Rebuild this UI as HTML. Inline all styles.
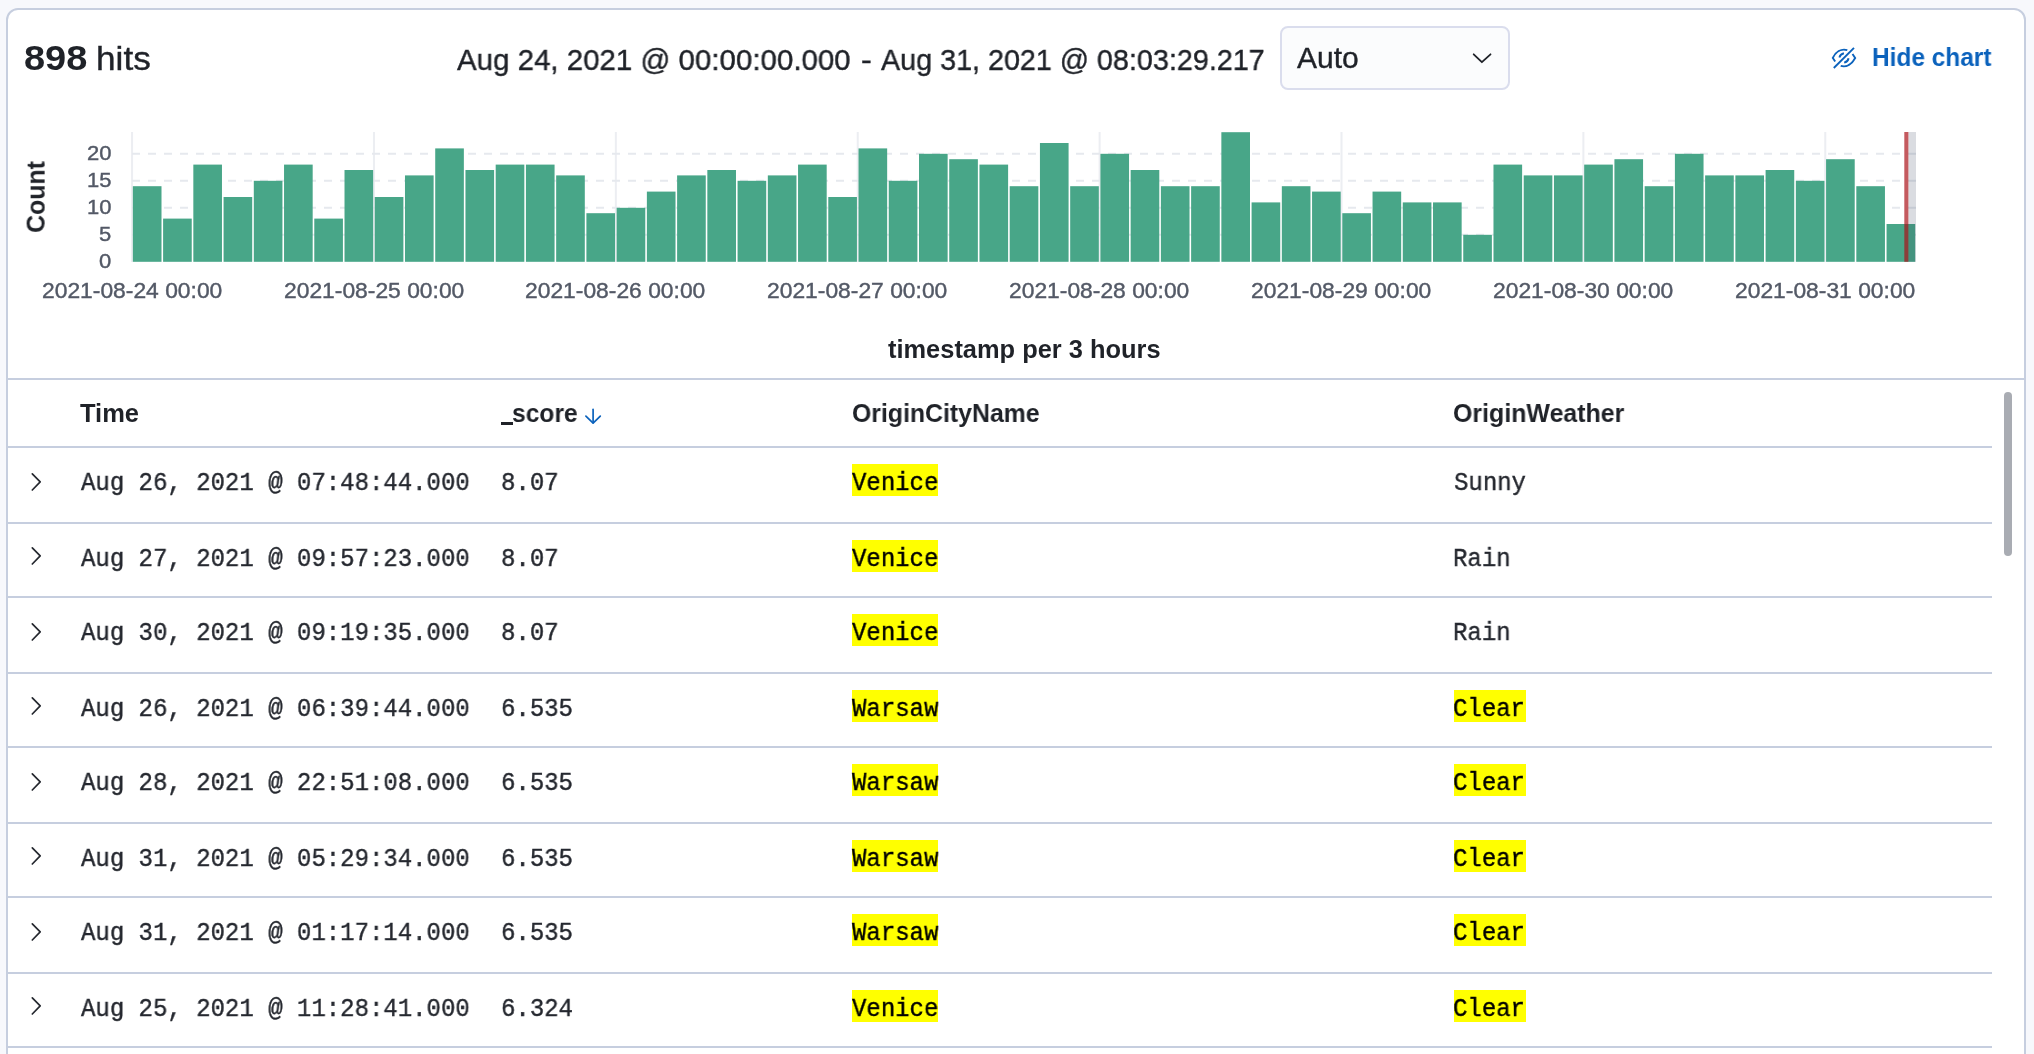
<!DOCTYPE html>
<html><head><meta charset="utf-8"><title>Discover</title>
<style>
html,body{margin:0;padding:0;overflow:hidden;width:2034px;height:1054px;}
#root{position:relative;width:2034px;height:1054px;overflow:hidden;background:#f7f8fc;}
body{width:2034px;height:1054px;overflow:hidden;background:#f7f8fc;position:relative;font-family:"Liberation Sans",sans-serif;}
.panel{position:absolute;left:6px;top:8px;width:2016px;height:1100px;border:2px solid #c6cedf;border-radius:12px;background:#fff;}
.t{position:absolute;white-space:pre;line-height:0;transform-origin:0 0;will-change:transform;}
.abs{position:absolute;}
.sel{position:absolute;left:1280px;top:26px;width:226px;height:60px;border:2px solid #dadded;border-radius:8px;background:#fbfcfd;}
.hl{position:absolute;height:2px;background:#c6cedf;}
.mk{position:absolute;height:32px;background:#ffff00;}
.thumb{position:absolute;left:2004px;top:392px;width:8px;height:164px;border-radius:4px;background:#a9acb3;}
</style></head><body>
<div id="root">
<div class="panel"></div>
<span class="t" style="left:24.06px;top:57.87px;font-family:'Liberation Sans', sans-serif;font-weight:700;font-size:35.00px;transform:scaleX(1.0841);color:#1f2228;">898</span>
<span class="t" style="left:96.24px;top:58.21px;font-family:'Liberation Sans', sans-serif;font-weight:400;font-size:34.00px;transform:scaleX(1.0345);color:#1f2228;-webkit-text-stroke:0.40px #1f2228;">hits</span>
<span class="t" style="left:457.10px;top:59.60px;font-family:'Liberation Sans', sans-serif;font-weight:400;font-size:30.00px;transform:scaleX(0.9821);color:#1f2228;-webkit-text-stroke:0.40px #1f2228;">Aug 24, 2021 @ 00:00:00.000</span>
<span class="t" style="left:860.65px;top:59.60px;font-family:'Liberation Sans', sans-serif;font-weight:400;font-size:30.00px;transform:scaleX(1.0748);color:#1f2228;-webkit-text-stroke:0.40px #1f2228;">-</span>
<span class="t" style="left:880.50px;top:59.60px;font-family:'Liberation Sans', sans-serif;font-weight:400;font-size:30.00px;transform:scaleX(0.9574);color:#1f2228;-webkit-text-stroke:0.40px #1f2228;">Aug 31, 2021 @ 08:03:29.217</span>
<div class="sel"></div>
<span class="t" style="left:1297.30px;top:57.50px;font-family:'Liberation Sans', sans-serif;font-weight:400;font-size:30.00px;color:#1f2228;-webkit-text-stroke:0.40px #1f2228;">Auto</span>
<svg class="abs" style="left:1466px;top:46px" width="32" height="24" viewBox="0 0 32 24"><path d="M7.7 8.3 L15.9 16.2 L24.5 8.3" fill="none" stroke="#1f2228" stroke-width="1.8" stroke-linecap="round" stroke-linejoin="round"/></svg>
<svg class="abs" style="left:1826px;top:42px" width="36" height="32" viewBox="0 0 36 32"><g fill="none" stroke="#0b62bc" stroke-width="1.9" stroke-linecap="butt">
<path d="M21.3 8.2 C15 6.4 9.6 10 6.8 15.9 L9.2 19.6"/>
<path d="M26.5 12 L29.2 16 C26 22 20.5 25.6 14.7 23.9"/>
<path d="M13.4 15.4 C14 13.2 15.6 11.8 17.9 11.3"/>
<path d="M18.2 20.6 C20.5 20.1 22.1 18.5 22.6 16.2"/>
<path d="M7.8 26 L28 5.8"/></g></svg>
<span class="t" style="left:1871.91px;top:57.09px;font-family:'Liberation Sans', sans-serif;font-weight:700;font-size:26.00px;transform:scaleX(0.9395);color:#0b62bc;">Hide chart</span>
<svg class="abs" style="left:0;top:0" width="2034" height="380" viewBox="0 0 2034 380"><rect x="131.06" y="132" width="2" height="130" fill="#eceef2"/><rect x="372.95" y="132" width="2" height="130" fill="#eceef2"/><rect x="614.84" y="132" width="2" height="130" fill="#eceef2"/><rect x="856.72" y="132" width="2" height="130" fill="#eceef2"/><rect x="1098.61" y="132" width="2" height="130" fill="#eceef2"/><rect x="1340.50" y="132" width="2" height="130" fill="#eceef2"/><rect x="1582.39" y="132" width="2" height="130" fill="#eceef2"/><rect x="1824.28" y="132" width="2" height="130" fill="#eceef2"/><line x1="132" x2="1916" y1="234.80" y2="234.80" stroke="#e6e9ee" stroke-width="2" stroke-dasharray="8 8"/><line x1="132" x2="1916" y1="207.80" y2="207.80" stroke="#e6e9ee" stroke-width="2" stroke-dasharray="8 8"/><line x1="132" x2="1916" y1="180.80" y2="180.80" stroke="#e6e9ee" stroke-width="2" stroke-dasharray="8 8"/><line x1="132" x2="1916" y1="153.80" y2="153.80" stroke="#e6e9ee" stroke-width="2" stroke-dasharray="8 8"/><rect x="132.86" y="186.20" width="28.64" height="75.60" fill="#48a688"/><rect x="163.10" y="218.60" width="28.64" height="43.20" fill="#48a688"/><rect x="193.33" y="164.60" width="28.64" height="97.20" fill="#48a688"/><rect x="223.57" y="197.00" width="28.64" height="64.80" fill="#48a688"/><rect x="253.80" y="180.80" width="28.64" height="81.00" fill="#48a688"/><rect x="284.04" y="164.60" width="28.64" height="97.20" fill="#48a688"/><rect x="314.28" y="218.60" width="28.64" height="43.20" fill="#48a688"/><rect x="344.51" y="170.00" width="28.64" height="91.80" fill="#48a688"/><rect x="374.75" y="197.00" width="28.64" height="64.80" fill="#48a688"/><rect x="404.98" y="175.40" width="28.64" height="86.40" fill="#48a688"/><rect x="435.22" y="148.40" width="28.64" height="113.40" fill="#48a688"/><rect x="465.46" y="170.00" width="28.64" height="91.80" fill="#48a688"/><rect x="495.69" y="164.60" width="28.64" height="97.20" fill="#48a688"/><rect x="525.93" y="164.60" width="28.64" height="97.20" fill="#48a688"/><rect x="556.16" y="175.40" width="28.64" height="86.40" fill="#48a688"/><rect x="586.40" y="213.20" width="28.64" height="48.60" fill="#48a688"/><rect x="616.64" y="207.80" width="28.64" height="54.00" fill="#48a688"/><rect x="646.87" y="191.60" width="28.64" height="70.20" fill="#48a688"/><rect x="677.11" y="175.40" width="28.64" height="86.40" fill="#48a688"/><rect x="707.34" y="170.00" width="28.64" height="91.80" fill="#48a688"/><rect x="737.58" y="180.80" width="28.64" height="81.00" fill="#48a688"/><rect x="767.82" y="175.40" width="28.64" height="86.40" fill="#48a688"/><rect x="798.05" y="164.60" width="28.64" height="97.20" fill="#48a688"/><rect x="828.29" y="197.00" width="28.64" height="64.80" fill="#48a688"/><rect x="858.52" y="148.40" width="28.64" height="113.40" fill="#48a688"/><rect x="888.76" y="180.80" width="28.64" height="81.00" fill="#48a688"/><rect x="919.00" y="153.80" width="28.64" height="108.00" fill="#48a688"/><rect x="949.23" y="159.20" width="28.64" height="102.60" fill="#48a688"/><rect x="979.47" y="164.60" width="28.64" height="97.20" fill="#48a688"/><rect x="1009.70" y="186.20" width="28.64" height="75.60" fill="#48a688"/><rect x="1039.94" y="143.00" width="28.64" height="118.80" fill="#48a688"/><rect x="1070.18" y="186.20" width="28.64" height="75.60" fill="#48a688"/><rect x="1100.41" y="153.80" width="28.64" height="108.00" fill="#48a688"/><rect x="1130.65" y="170.00" width="28.64" height="91.80" fill="#48a688"/><rect x="1160.88" y="186.20" width="28.64" height="75.60" fill="#48a688"/><rect x="1191.12" y="186.20" width="28.64" height="75.60" fill="#48a688"/><rect x="1221.36" y="132.20" width="28.64" height="129.60" fill="#48a688"/><rect x="1251.59" y="202.40" width="28.64" height="59.40" fill="#48a688"/><rect x="1281.83" y="186.20" width="28.64" height="75.60" fill="#48a688"/><rect x="1312.06" y="191.60" width="28.64" height="70.20" fill="#48a688"/><rect x="1342.30" y="213.20" width="28.64" height="48.60" fill="#48a688"/><rect x="1372.54" y="191.60" width="28.64" height="70.20" fill="#48a688"/><rect x="1402.77" y="202.40" width="28.64" height="59.40" fill="#48a688"/><rect x="1433.01" y="202.40" width="28.64" height="59.40" fill="#48a688"/><rect x="1463.24" y="234.80" width="28.64" height="27.00" fill="#48a688"/><rect x="1493.48" y="164.60" width="28.64" height="97.20" fill="#48a688"/><rect x="1523.72" y="175.40" width="28.64" height="86.40" fill="#48a688"/><rect x="1553.95" y="175.40" width="28.64" height="86.40" fill="#48a688"/><rect x="1584.19" y="164.60" width="28.64" height="97.20" fill="#48a688"/><rect x="1614.42" y="159.20" width="28.64" height="102.60" fill="#48a688"/><rect x="1644.66" y="186.20" width="28.64" height="75.60" fill="#48a688"/><rect x="1674.90" y="153.80" width="28.64" height="108.00" fill="#48a688"/><rect x="1705.13" y="175.40" width="28.64" height="86.40" fill="#48a688"/><rect x="1735.37" y="175.40" width="28.64" height="86.40" fill="#48a688"/><rect x="1765.60" y="170.00" width="28.64" height="91.80" fill="#48a688"/><rect x="1795.84" y="180.80" width="28.64" height="81.00" fill="#48a688"/><rect x="1826.08" y="159.20" width="28.64" height="102.60" fill="#48a688"/><rect x="1856.31" y="186.20" width="28.64" height="75.60" fill="#48a688"/><rect x="1886.55" y="224.00" width="28.64" height="37.80" fill="#48a688"/><rect x="1908.4" y="132" width="7.6" height="129.8" fill="#343c5a" opacity="0.18"/><rect x="1904.3" y="132" width="4.1" height="129.8" fill="#a91017" opacity="0.69"/></svg>
<span class="t" style="left:0.00px;top:0.00px;font-family:'Liberation Sans',sans-serif;font-weight:700;font-size:25px;color:#1f2228;transform-origin:0 0;transform:translate(35.63px,232.90px) rotate(-90deg) scaleX(0.9961) translate(0,-0.00px);">Count</span>
<span class="t" style="left:87.15px;top:153.07px;font-family:'Liberation Sans', sans-serif;font-weight:400;font-size:20.00px;transform:scaleX(1.1000);color:#535966;-webkit-text-stroke:0.40px #535966;">20</span>
<span class="t" style="left:87.26px;top:180.07px;font-family:'Liberation Sans', sans-serif;font-weight:400;font-size:20.00px;transform:scaleX(1.1000);color:#535966;-webkit-text-stroke:0.40px #535966;">15</span>
<span class="t" style="left:87.15px;top:207.07px;font-family:'Liberation Sans', sans-serif;font-weight:400;font-size:20.00px;transform:scaleX(1.1000);color:#535966;-webkit-text-stroke:0.40px #535966;">10</span>
<span class="t" style="left:99.47px;top:234.07px;font-family:'Liberation Sans', sans-serif;font-weight:400;font-size:20.00px;transform:scaleX(1.1000);color:#535966;-webkit-text-stroke:0.40px #535966;">5</span>
<span class="t" style="left:99.36px;top:261.37px;font-family:'Liberation Sans', sans-serif;font-weight:400;font-size:20.00px;transform:scaleX(1.1000);color:#535966;-webkit-text-stroke:0.40px #535966;">0</span>
<span class="t" style="left:41.72px;top:290.88px;font-family:'Liberation Sans', sans-serif;font-weight:400;font-size:21.40px;transform:scaleX(1.0674);color:#535966;-webkit-text-stroke:0.40px #535966;">2021-08-24 00:00</span>
<span class="t" style="left:283.61px;top:290.88px;font-family:'Liberation Sans', sans-serif;font-weight:400;font-size:21.40px;transform:scaleX(1.0674);color:#535966;-webkit-text-stroke:0.40px #535966;">2021-08-25 00:00</span>
<span class="t" style="left:525.49px;top:290.88px;font-family:'Liberation Sans', sans-serif;font-weight:400;font-size:21.40px;transform:scaleX(1.0674);color:#535966;-webkit-text-stroke:0.40px #535966;">2021-08-26 00:00</span>
<span class="t" style="left:767.38px;top:290.88px;font-family:'Liberation Sans', sans-serif;font-weight:400;font-size:21.40px;transform:scaleX(1.0674);color:#535966;-webkit-text-stroke:0.40px #535966;">2021-08-27 00:00</span>
<span class="t" style="left:1009.27px;top:290.88px;font-family:'Liberation Sans', sans-serif;font-weight:400;font-size:21.40px;transform:scaleX(1.0674);color:#535966;-webkit-text-stroke:0.40px #535966;">2021-08-28 00:00</span>
<span class="t" style="left:1251.16px;top:290.88px;font-family:'Liberation Sans', sans-serif;font-weight:400;font-size:21.40px;transform:scaleX(1.0674);color:#535966;-webkit-text-stroke:0.40px #535966;">2021-08-29 00:00</span>
<span class="t" style="left:1493.05px;top:290.88px;font-family:'Liberation Sans', sans-serif;font-weight:400;font-size:21.40px;transform:scaleX(1.0674);color:#535966;-webkit-text-stroke:0.40px #535966;">2021-08-30 00:00</span>
<span class="t" style="left:1734.93px;top:290.88px;font-family:'Liberation Sans', sans-serif;font-weight:400;font-size:21.40px;transform:scaleX(1.0674);color:#535966;-webkit-text-stroke:0.40px #535966;">2021-08-31 00:00</span>
<span class="t" style="left:888.05px;top:349.13px;font-family:'Liberation Sans', sans-serif;font-weight:700;font-size:25.00px;transform:scaleX(1.0166);color:#1f2228;">timestamp per 3 hours</span>
<div class="hl" style="top:378px;left:8px;width:2016px"></div>
<span class="t" style="left:80.45px;top:413.06px;font-family:'Liberation Sans', sans-serif;font-weight:700;font-size:25.50px;transform:scaleX(0.9933);color:#1f2228;">Time</span>
<div class="abs" style="left:501px;top:422.3px;width:11.5px;height:2.5px;background:#1f2228"></div>
<span class="t" style="left:512.44px;top:413.06px;font-family:'Liberation Sans', sans-serif;font-weight:700;font-size:25.50px;transform:scaleX(0.9657);color:#1f2228;">score</span>
<svg class="abs" style="left:580px;top:404px" width="26" height="24" viewBox="0 0 26 24"><g fill="none" stroke="#0b62bc" stroke-width="1.7" stroke-linecap="round" stroke-linejoin="round"><path d="M13.1 5.3 L13.1 18.6"/><path d="M5.9 12.2 L13.1 19.1 L20.3 12.2"/></g></svg>
<span class="t" style="left:851.81px;top:413.06px;font-family:'Liberation Sans', sans-serif;font-weight:700;font-size:25.50px;transform:scaleX(0.9736);color:#1f2228;">OriginCityName</span>
<span class="t" style="left:1452.80px;top:413.06px;font-family:'Liberation Sans', sans-serif;font-weight:700;font-size:25.50px;transform:scaleX(0.9781);color:#1f2228;">OriginWeather</span>
<div class="hl" style="top:446px;left:8px;width:1984px"></div>
<div class="hl" style="top:522px;left:8px;width:1984px"></div>
<div class="hl" style="top:596px;left:8px;width:1984px"></div>
<div class="hl" style="top:672px;left:8px;width:1984px"></div>
<div class="hl" style="top:746px;left:8px;width:1984px"></div>
<div class="hl" style="top:822px;left:8px;width:1984px"></div>
<div class="hl" style="top:896px;left:8px;width:1984px"></div>
<div class="hl" style="top:972px;left:8px;width:1984px"></div>
<div class="hl" style="top:1046px;left:8px;width:1984px"></div>
<svg class="abs" style="left:24px;top:469px" width="24" height="28" viewBox="0 0 24 28"><path d="M8.3 4.8 L16.2 12.9 L8.3 21" fill="none" stroke="#25282f" stroke-width="1.7" stroke-linecap="round" stroke-linejoin="round"/></svg>
<span class="t" style="left:80.90px;top:482.97px;font-family:'Liberation Mono', monospace;font-weight:400;font-size:26.40px;transform:scaleX(0.9091);color:#25282f;-webkit-text-stroke:0.40px #25282f;">Aug 26, 2021 @ 07:48:44.000</span>
<span class="t" style="left:501.04px;top:482.97px;font-family:'Liberation Mono', monospace;font-weight:400;font-size:26.40px;transform:scaleX(0.9091);color:#25282f;-webkit-text-stroke:0.40px #25282f;">8.07</span>
<div class="mk" style="left:852px;top:464px;width:86px"></div>
<span class="t" style="left:852.28px;top:482.97px;font-family:'Liberation Mono', monospace;font-weight:400;font-size:26.40px;transform:scaleX(0.9091);color:#000;-webkit-text-stroke:0.40px #000;">Venice</span>
<span class="t" style="left:1453.64px;top:482.97px;font-family:'Liberation Mono', monospace;font-weight:400;font-size:26.40px;transform:scaleX(0.9091);color:#25282f;-webkit-text-stroke:0.40px #25282f;">Sunny</span>
<svg class="abs" style="left:24px;top:543px" width="24" height="28" viewBox="0 0 24 28"><path d="M8.3 4.8 L16.2 12.9 L8.3 21" fill="none" stroke="#25282f" stroke-width="1.7" stroke-linecap="round" stroke-linejoin="round"/></svg>
<span class="t" style="left:80.90px;top:558.97px;font-family:'Liberation Mono', monospace;font-weight:400;font-size:26.40px;transform:scaleX(0.9091);color:#25282f;-webkit-text-stroke:0.40px #25282f;">Aug 27, 2021 @ 09:57:23.000</span>
<span class="t" style="left:501.04px;top:558.97px;font-family:'Liberation Mono', monospace;font-weight:400;font-size:26.40px;transform:scaleX(0.9091);color:#25282f;-webkit-text-stroke:0.40px #25282f;">8.07</span>
<div class="mk" style="left:852px;top:540px;width:86px"></div>
<span class="t" style="left:852.28px;top:558.97px;font-family:'Liberation Mono', monospace;font-weight:400;font-size:26.40px;transform:scaleX(0.9091);color:#000;-webkit-text-stroke:0.40px #000;">Venice</span>
<span class="t" style="left:1452.68px;top:558.97px;font-family:'Liberation Mono', monospace;font-weight:400;font-size:26.40px;transform:scaleX(0.9091);color:#25282f;-webkit-text-stroke:0.40px #25282f;">Rain</span>
<svg class="abs" style="left:24px;top:619px" width="24" height="28" viewBox="0 0 24 28"><path d="M8.3 4.8 L16.2 12.9 L8.3 21" fill="none" stroke="#25282f" stroke-width="1.7" stroke-linecap="round" stroke-linejoin="round"/></svg>
<span class="t" style="left:80.90px;top:632.97px;font-family:'Liberation Mono', monospace;font-weight:400;font-size:26.40px;transform:scaleX(0.9091);color:#25282f;-webkit-text-stroke:0.40px #25282f;">Aug 30, 2021 @ 09:19:35.000</span>
<span class="t" style="left:501.04px;top:632.97px;font-family:'Liberation Mono', monospace;font-weight:400;font-size:26.40px;transform:scaleX(0.9091);color:#25282f;-webkit-text-stroke:0.40px #25282f;">8.07</span>
<div class="mk" style="left:852px;top:614px;width:86px"></div>
<span class="t" style="left:852.28px;top:632.97px;font-family:'Liberation Mono', monospace;font-weight:400;font-size:26.40px;transform:scaleX(0.9091);color:#000;-webkit-text-stroke:0.40px #000;">Venice</span>
<span class="t" style="left:1452.68px;top:632.97px;font-family:'Liberation Mono', monospace;font-weight:400;font-size:26.40px;transform:scaleX(0.9091);color:#25282f;-webkit-text-stroke:0.40px #25282f;">Rain</span>
<svg class="abs" style="left:24px;top:693px" width="24" height="28" viewBox="0 0 24 28"><path d="M8.3 4.8 L16.2 12.9 L8.3 21" fill="none" stroke="#25282f" stroke-width="1.7" stroke-linecap="round" stroke-linejoin="round"/></svg>
<span class="t" style="left:80.90px;top:708.97px;font-family:'Liberation Mono', monospace;font-weight:400;font-size:26.40px;transform:scaleX(0.9091);color:#25282f;-webkit-text-stroke:0.40px #25282f;">Aug 26, 2021 @ 06:39:44.000</span>
<span class="t" style="left:500.80px;top:708.97px;font-family:'Liberation Mono', monospace;font-weight:400;font-size:26.40px;transform:scaleX(0.9091);color:#25282f;-webkit-text-stroke:0.40px #25282f;">6.535</span>
<div class="mk" style="left:852px;top:690px;width:86px"></div>
<span class="t" style="left:852.40px;top:708.97px;font-family:'Liberation Mono', monospace;font-weight:400;font-size:26.40px;transform:scaleX(0.9091);color:#000;-webkit-text-stroke:0.40px #000;">Warsaw</span>
<div class="mk" style="left:1454px;top:690px;width:72px"></div>
<span class="t" style="left:1452.78px;top:708.97px;font-family:'Liberation Mono', monospace;font-weight:400;font-size:26.40px;transform:scaleX(0.9091);color:#000;-webkit-text-stroke:0.40px #000;">Clear</span>
<svg class="abs" style="left:24px;top:769px" width="24" height="28" viewBox="0 0 24 28"><path d="M8.3 4.8 L16.2 12.9 L8.3 21" fill="none" stroke="#25282f" stroke-width="1.7" stroke-linecap="round" stroke-linejoin="round"/></svg>
<span class="t" style="left:80.90px;top:782.97px;font-family:'Liberation Mono', monospace;font-weight:400;font-size:26.40px;transform:scaleX(0.9091);color:#25282f;-webkit-text-stroke:0.40px #25282f;">Aug 28, 2021 @ 22:51:08.000</span>
<span class="t" style="left:500.80px;top:782.97px;font-family:'Liberation Mono', monospace;font-weight:400;font-size:26.40px;transform:scaleX(0.9091);color:#25282f;-webkit-text-stroke:0.40px #25282f;">6.535</span>
<div class="mk" style="left:852px;top:764px;width:86px"></div>
<span class="t" style="left:852.40px;top:782.97px;font-family:'Liberation Mono', monospace;font-weight:400;font-size:26.40px;transform:scaleX(0.9091);color:#000;-webkit-text-stroke:0.40px #000;">Warsaw</span>
<div class="mk" style="left:1454px;top:764px;width:72px"></div>
<span class="t" style="left:1452.78px;top:782.97px;font-family:'Liberation Mono', monospace;font-weight:400;font-size:26.40px;transform:scaleX(0.9091);color:#000;-webkit-text-stroke:0.40px #000;">Clear</span>
<svg class="abs" style="left:24px;top:843px" width="24" height="28" viewBox="0 0 24 28"><path d="M8.3 4.8 L16.2 12.9 L8.3 21" fill="none" stroke="#25282f" stroke-width="1.7" stroke-linecap="round" stroke-linejoin="round"/></svg>
<span class="t" style="left:80.90px;top:858.97px;font-family:'Liberation Mono', monospace;font-weight:400;font-size:26.40px;transform:scaleX(0.9091);color:#25282f;-webkit-text-stroke:0.40px #25282f;">Aug 31, 2021 @ 05:29:34.000</span>
<span class="t" style="left:500.80px;top:858.97px;font-family:'Liberation Mono', monospace;font-weight:400;font-size:26.40px;transform:scaleX(0.9091);color:#25282f;-webkit-text-stroke:0.40px #25282f;">6.535</span>
<div class="mk" style="left:852px;top:840px;width:86px"></div>
<span class="t" style="left:852.40px;top:858.97px;font-family:'Liberation Mono', monospace;font-weight:400;font-size:26.40px;transform:scaleX(0.9091);color:#000;-webkit-text-stroke:0.40px #000;">Warsaw</span>
<div class="mk" style="left:1454px;top:840px;width:72px"></div>
<span class="t" style="left:1452.78px;top:858.97px;font-family:'Liberation Mono', monospace;font-weight:400;font-size:26.40px;transform:scaleX(0.9091);color:#000;-webkit-text-stroke:0.40px #000;">Clear</span>
<svg class="abs" style="left:24px;top:919px" width="24" height="28" viewBox="0 0 24 28"><path d="M8.3 4.8 L16.2 12.9 L8.3 21" fill="none" stroke="#25282f" stroke-width="1.7" stroke-linecap="round" stroke-linejoin="round"/></svg>
<span class="t" style="left:80.90px;top:932.97px;font-family:'Liberation Mono', monospace;font-weight:400;font-size:26.40px;transform:scaleX(0.9091);color:#25282f;-webkit-text-stroke:0.40px #25282f;">Aug 31, 2021 @ 01:17:14.000</span>
<span class="t" style="left:500.80px;top:932.97px;font-family:'Liberation Mono', monospace;font-weight:400;font-size:26.40px;transform:scaleX(0.9091);color:#25282f;-webkit-text-stroke:0.40px #25282f;">6.535</span>
<div class="mk" style="left:852px;top:914px;width:86px"></div>
<span class="t" style="left:852.40px;top:932.97px;font-family:'Liberation Mono', monospace;font-weight:400;font-size:26.40px;transform:scaleX(0.9091);color:#000;-webkit-text-stroke:0.40px #000;">Warsaw</span>
<div class="mk" style="left:1454px;top:914px;width:72px"></div>
<span class="t" style="left:1452.78px;top:932.97px;font-family:'Liberation Mono', monospace;font-weight:400;font-size:26.40px;transform:scaleX(0.9091);color:#000;-webkit-text-stroke:0.40px #000;">Clear</span>
<svg class="abs" style="left:24px;top:993px" width="24" height="28" viewBox="0 0 24 28"><path d="M8.3 4.8 L16.2 12.9 L8.3 21" fill="none" stroke="#25282f" stroke-width="1.7" stroke-linecap="round" stroke-linejoin="round"/></svg>
<span class="t" style="left:80.90px;top:1008.97px;font-family:'Liberation Mono', monospace;font-weight:400;font-size:26.40px;transform:scaleX(0.9091);color:#25282f;-webkit-text-stroke:0.40px #25282f;">Aug 25, 2021 @ 11:28:41.000</span>
<span class="t" style="left:500.80px;top:1008.97px;font-family:'Liberation Mono', monospace;font-weight:400;font-size:26.40px;transform:scaleX(0.9091);color:#25282f;-webkit-text-stroke:0.40px #25282f;">6.324</span>
<div class="mk" style="left:852px;top:990px;width:86px"></div>
<span class="t" style="left:852.28px;top:1008.97px;font-family:'Liberation Mono', monospace;font-weight:400;font-size:26.40px;transform:scaleX(0.9091);color:#000;-webkit-text-stroke:0.40px #000;">Venice</span>
<div class="mk" style="left:1454px;top:990px;width:72px"></div>
<span class="t" style="left:1452.78px;top:1008.97px;font-family:'Liberation Mono', monospace;font-weight:400;font-size:26.40px;transform:scaleX(0.9091);color:#000;-webkit-text-stroke:0.40px #000;">Clear</span>
<div class="thumb"></div>
</div>
</body></html>
